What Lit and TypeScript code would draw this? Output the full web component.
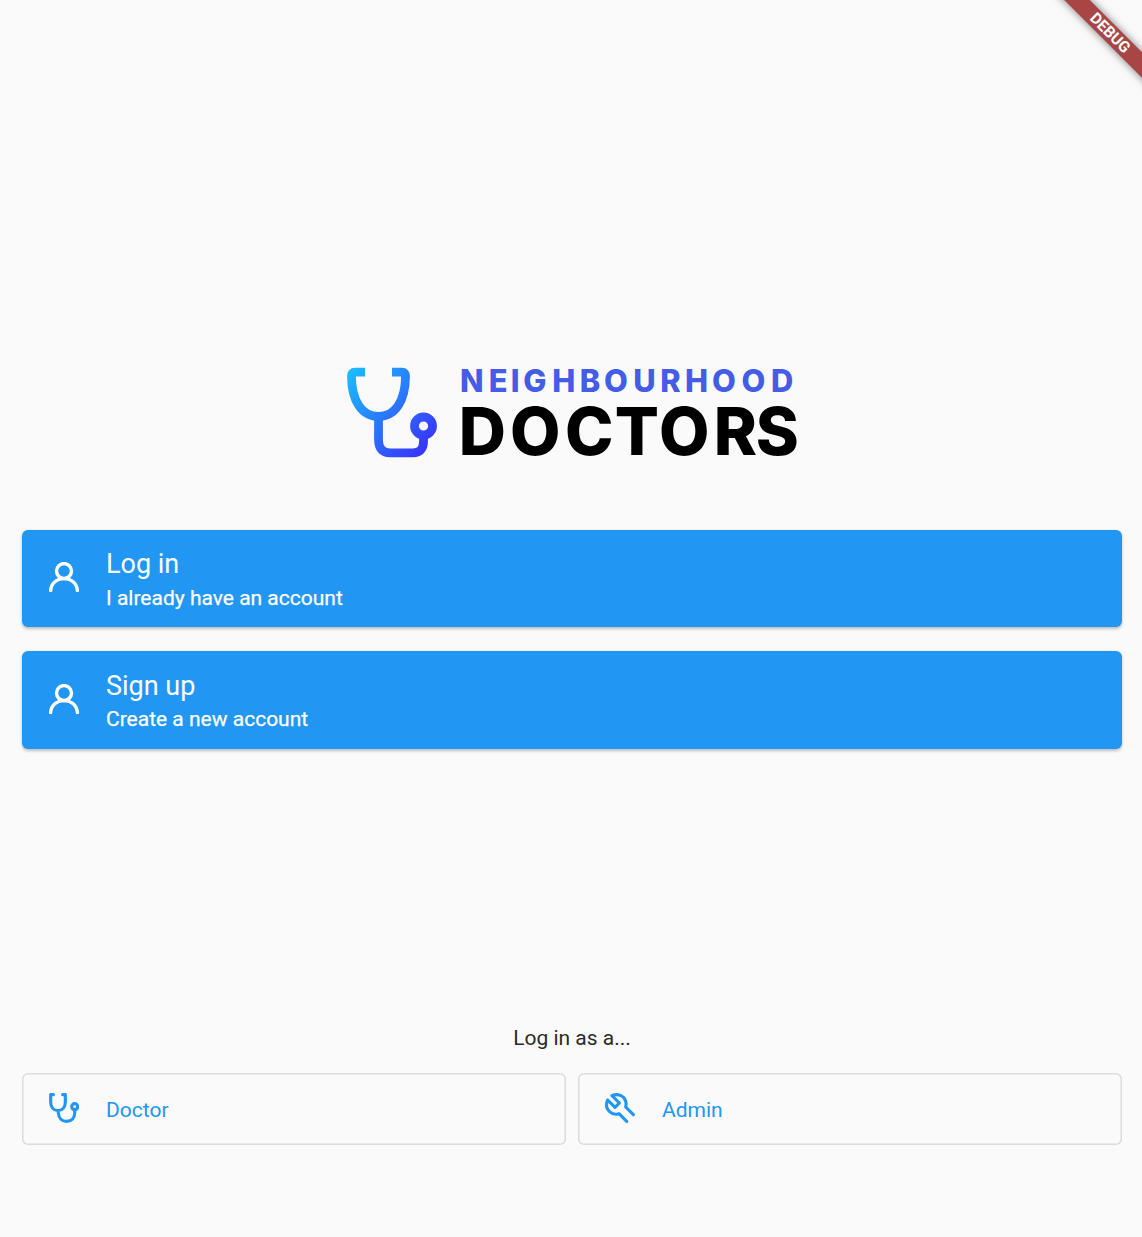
import { LitElement, html, svg, css } from "lit";
import { customElement } from "lit/decorators.js";

const userIcon = html`<svg class="icon" viewBox="0 0 90 90" fill="none" stroke="currentColor" stroke-width="10" stroke-linecap="round">
  <circle cx="45" cy="27" r="22.5"/><path d="M5 86C6 65 22 50 45 50S84 65 85 86"/></svg>`;

const stethoscopeIcon = html`<svg class="icon" viewBox="0 0 90 90" fill="none" stroke="currentColor" stroke-width="9.500" stroke-linecap="round" stroke-linejoin="round">
  <path d="M13 5H5V27C5 43 14 53 27 53S49 43 49 27V5H41M28 55V60C29 75 39 85 53 85S77 75 77 60V52"/><circle cx="77" cy="41" r="9"/></svg>`;

const wrenchIcon = html`<svg class="icon" viewBox="0 0 90 90" fill="none" stroke="currentColor" stroke-width="9.500" stroke-linecap="round" stroke-linejoin="round">
  <path d="M85 65L62 42C66 28 60 14 48 8C39 4 29 4 21 8L43 30L30 43L8 21C4 30 3 40 8 49C15 61 29 66 42 62L65 85"/></svg>`;

const glyphs = (text: string, xs: number[], y: number, cls: string) =>
  svg`<text class=${cls} x=${xs.join(" ")} y=${y}>${text}</text>`;

@customElement("app-root")
export class AppRoot extends LitElement {
  static styles = css`
    :host { display: block; font-family: Roboto, sans-serif; }
    .page { box-sizing: border-box; position: relative; height: 1237px; padding: 360px 20px 0 22px; background: #fafafa; overflow: hidden; display: flex; flex-direction: column; }
    .logo { display: block; width: 460px; height: 105px; margin: 0 0 64.500px 318px; flex: none; overflow: visible; }
    .small { font: 800 30.800px Inter, sans-serif; fill: #455ce6; }
    .big { font: 800 65.300px Inter, sans-serif; fill: #000; }
    .primary { display: flex; flex-direction: column; gap: 24px; }
    .card { box-sizing: border-box; height: 97.500px; display: flex; align-items: center; padding-left: 27px; gap: 27px; border-radius: 6px; background: #2196f3; color: #fff; box-shadow: 0 1.500px 3px rgba(0,0,0,.24); }
    .icon { width: 30px; height: 30px; flex: none; display: block; }
    .card .icon { margin-top: -2px; }
    .title { font-size: 27px; line-height: 32px; margin-top: 2px; }
    .sub { font-size: 21px; line-height: 25px; margin-top: 5.500px; -webkit-text-stroke: .25px #fff; }
    .hint { margin-top: 276px; text-align: center; font-size: 21px; line-height: 26px; color: #2b2b2b; }
    .roles { display: flex; gap: 12px; margin-top: 22px; }
    .role { box-sizing: border-box; flex: 1; height: 72px; display: flex; align-items: center; gap: 27px; padding-left: 27px; box-shadow: inset 0 0 0 1.500px #dcdcdc; border-radius: 6px; color: #2196f3; font-size: 21px; }
    .role .icon { margin-top: -2px; }
    .role span { margin-top: 3px; }
    .ribbon { position: absolute; right: -67.500px; top: 24px; width: 200px; height: 18px; transform: rotate(45deg); background: #a84646; box-shadow: 0 0 9px rgba(0,0,0,.5); color: #fff; font-size: 15.500px; line-height: 18px; font-weight: 700; text-align: center; }
  `;

  private card(title: string, sub: string) {
    return html`<div class="card">${userIcon}<div><div class="title">${title}</div><div class="sub">${sub}</div></div></div>`;
  }

  render() {
    return html`<div class="page">
      <svg class="logo" viewBox="340 360 460 105">
        <defs><linearGradient id="tube" gradientUnits="userSpaceOnUse" x1="346" y1="374" x2="430" y2="450">
          <stop offset="0" stop-color="#1cbcff"/><stop offset=".5" stop-color="#2a78ff"/><stop offset="1" stop-color="#3a30fc"/>
        </linearGradient></defs>
        <g fill="none" stroke="url(#tube)" stroke-width="8.800">
          <path d="M365 372.200H355Q351.500 372.200 351.500 376C351.500 401 362 416.500 378.500 416.500S405.500 401 405.500 376Q405.500 372.200 402 372.200H392"/>
          <path d="M378.500 416V439Q378.500 452.800 390 452.800H413Q423.500 452.800 423.500 441V437"/>
          <circle cx="423.500" cy="426" r="9"/>
        </g>
        ${glyphs("NEIGHBOURHOOD", [460, 488.7, 510.7, 523.3, 552.3, 579.7, 604, 633.3, 660.3, 685, 712, 741.5, 771], 391.6, "small")}
        ${glyphs("DOCTORS", [458.7, 510, 565, 614.7, 659, 713.7, 755.7], 454.5, "big")}
      </svg>
      <div class="primary">
        ${this.card("Log in", "I already have an account")}
        ${this.card("Sign up", "Create a new account")}
      </div>
      <div class="hint">Log in as a...</div>
      <div class="roles">
        <div class="role">${stethoscopeIcon}<span>Doctor</span></div>
        <div class="role">${wrenchIcon}<span>Admin</span></div>
      </div>
      <div class="ribbon">DEBUG</div>
    </div>`;
  }
}
